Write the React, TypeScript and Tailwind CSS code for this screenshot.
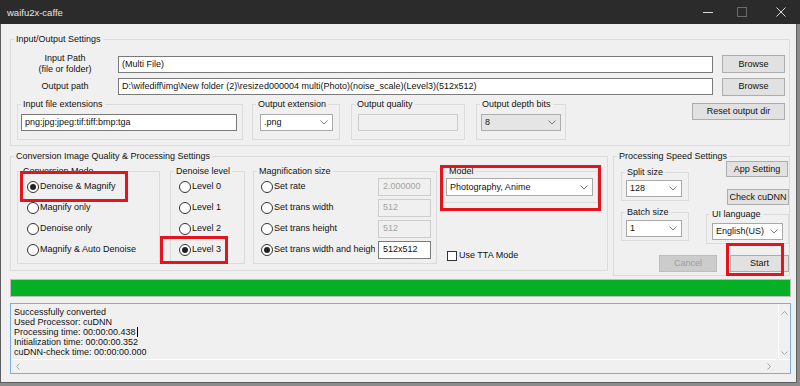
import React from 'react'

const Chevron = () => (
  <svg width="8" height="5" viewBox="0 0 8 5" className="shrink-0">
    <path d="M0.5 0.5 L4 4 L7.5 0.5" fill="none" stroke="#7a7a7a" strokeWidth="1" />
  </svg>
)

const Legend = ({ children }: { children: React.ReactNode }) => (
  <legend className="ml-[3px] px-[2px] leading-[11px]">{children}</legend>
)

const TextBox = ({
  children,
  className = '',
  disabled = false,
}: {
  children?: React.ReactNode
  className?: string
  disabled?: boolean
}) => (
  <div
    className={`flex items-center overflow-hidden whitespace-nowrap border pl-[3px] ${
      disabled
        ? 'border-[#cccccc] bg-[#f0f0f0] text-[#a3a3a3]'
        : 'border-[#7a7a7a] bg-white'
    } ${className}`}
  >
    {children}
  </div>
)

const Select = ({
  value,
  className = '',
  grey = false,
}: {
  value: string
  className?: string
  grey?: boolean
}) => (
  <div
    className={`flex h-[17px] items-center justify-between border pl-[3px] pr-[4px] ${
      grey ? 'border-[#adadad] bg-[#e5e5e5]' : 'border-[#a9a9a9] bg-white'
    } ${className}`}
  >
    <span className="whitespace-nowrap">{value}</span>
    <Chevron />
  </div>
)

const Button = ({
  children,
  className = '',
  disabled = false,
}: {
  children: React.ReactNode
  className?: string
  disabled?: boolean
}) => (
  <div
    className={`flex shrink-0 items-center justify-center border ${
      disabled
        ? 'border-[#bfbfbf] bg-[#cccccc] text-[#9d9d9d]'
        : 'border-[#adadad] bg-[#e1e1e1]'
    } ${className}`}
  >
    {children}
  </div>
)

const Radio = ({ label, checked = false }: { label: string; checked?: boolean }) => (
  <div className="flex h-[21px] items-center whitespace-nowrap">
    <span className="flex h-[12px] w-[12px] shrink-0 items-center justify-center rounded-full border border-[#333333] bg-white">
      {checked && <span className="h-[6px] w-[6px] rounded-full bg-[#222222]" />}
    </span>
    <span className="ml-[1px]">{label}</span>
  </div>
)

const magnifyRows = [
  { label: 'Set rate', value: '2.000000', disabled: true },
  { label: 'Set trans width', value: '512', disabled: true },
  { label: 'Set trans height', value: '512', disabled: true },
  { label: 'Set trans width and height', value: '512x512', disabled: false, checked: true },
]

const logLines = [
  'Successfully converted',
  'Used Processor: cuDNN',
  'Processing time: 00:00:00.438',
  'Initialization time: 00:00:00.352',
  'cuDNN-check time: 00:00:00.000',
]

export default function App() {
  return (
    <div className="relative h-[386px] w-[800px] overflow-hidden bg-[#8c8c8c] font-['Liberation_Sans',Arial,sans-serif] text-[9px] leading-[11px] text-[#111111]">
      {/* title bar */}
      <div className="flex h-[24px] items-center bg-[#2b2b2b] pl-[7px] text-[9.5px] text-[#e8e8e8]">
        <span>waifu2x-caffe</span>
        <div className="ml-auto mr-[14px] flex items-center">
          <svg width="10" height="10" viewBox="0 0 10 10">
            <path d="M0 5.5 H10" stroke="#dcdcdc" strokeWidth="1" />
          </svg>
          <svg width="10" height="10" viewBox="0 0 10 10" className="ml-[24px]">
            <rect x="0.5" y="0.5" width="9" height="9" fill="none" stroke="#6a6a6a" strokeWidth="1" />
          </svg>
          <svg width="10" height="10" viewBox="0 0 10 10" className="ml-[29px]">
            <path d="M0.5 0.5 L9.5 9.5 M9.5 0.5 L0.5 9.5" stroke="#dcdcdc" strokeWidth="1" />
          </svg>
        </div>
      </div>

      {/* window body */}
      <div className="h-[359px] w-[797px] border-x border-b border-[#5e5e5e] bg-[#f0f0f0] pl-[9px] pt-[10px]">
        {/* Input/Output Settings */}
        <fieldset className="w-[780px] border border-[#dcdcdc] pb-[5px]">
          <Legend>Input/Output Settings</Legend>
          <div className="mt-[7px] flex h-[24px] items-center">
            <div className="ml-[4px] w-[100px] text-center leading-[11px]">
              Input Path
              <br />
              (file or folder)
            </div>
            <TextBox className="ml-[3px] h-[17px] w-[595px]">(Multi File)</TextBox>
            <Button className="ml-[9px] h-[18px] w-[63px]">Browse</Button>
          </div>
          <div className="mt-[1px] flex h-[19px] items-center">
            <div className="ml-[4px] w-[100px] text-center">Output path</div>
            <TextBox className="ml-[3px] h-[17px] w-[595px]">
              {'D:\\wifediff\\img\\New folder (2)\\resized000004 multi(Photo)(noise_scale)(Level3)(512x512)'}
            </TextBox>
            <Button className="ml-[9px] h-[18px] w-[63px]">Browse</Button>
          </div>
          <div className="mt-[3px] flex items-start">
            <fieldset className="ml-[6px] w-[226px] border border-[#dcdcdc]">
              <Legend>Input file extensions</Legend>
              <div className="px-[3px] pb-[8px] pt-[4px]">
                <TextBox className="h-[17px] w-[216px]">png:jpg:jpeg:tif:tiff:bmp:tga</TextBox>
              </div>
            </fieldset>
            <fieldset className="ml-[9px] w-[88px] border border-[#dcdcdc]">
              <Legend>Output extension</Legend>
              <div className="pb-[8px] pl-[7px] pt-[4px]">
                <Select className="w-[73px]" value=".png" />
              </div>
            </fieldset>
            <fieldset className="ml-[11px] w-[114px] border border-[#dcdcdc]">
              <Legend>Output quality</Legend>
              <div className="pb-[8px] pl-[6px] pt-[4px]">
                <TextBox disabled className="h-[17px] w-[100px]" />
              </div>
            </fieldset>
            <fieldset className="ml-[11px] w-[90px] border border-[#dcdcdc]">
              <Legend>Output depth bits</Legend>
              <div className="pb-[8px] pl-[4px] pt-[4px]">
                <Select grey className="w-[80px]" value="8" />
              </div>
            </fieldset>
            <Button className="ml-[126px] mt-[4px] h-[17px] w-[93px]">Reset output dir</Button>
          </div>
        </fieldset>

        {/* conversion + processing speed */}
        <div className="mt-[5px] flex items-start">
          <fieldset className="w-[598px] border border-[#dcdcdc] pb-[6px]">
            <Legend>Conversion Image Quality &amp; Processing Settings</Legend>
            <div className="mt-[4px] flex items-stretch">
              <fieldset className="ml-[6px] w-[143px] border border-[#dcdcdc]">
                <Legend>Conversion Mode</Legend>
                <div className="-mt-[1px] pb-[3px] pl-[9px]">
                  <Radio checked label="Denoise & Magnify" />
                  <Radio label="Magnify only" />
                  <Radio label="Denoise only" />
                  <Radio label="Magnify & Auto Denoise" />
                </div>
              </fieldset>
              <fieldset className="ml-[10px] w-[75px] border border-[#dcdcdc]">
                <Legend>Denoise level</Legend>
                <div className="-mt-[1px] pb-[3px] pl-[8px]">
                  <Radio label="Level 0" />
                  <Radio label="Level 1" />
                  <Radio label="Level 2" />
                  <Radio checked label="Level 3" />
                </div>
              </fieldset>
              <fieldset className="ml-[8px] w-[184px] border border-[#dcdcdc]">
                <Legend>Magnification size</Legend>
                <div className="-mt-[1px] pb-[3px] pl-[7px]">
                  {magnifyRows.map((row) => (
                    <div key={row.label} className="flex h-[21px] items-center">
                      <div className="w-[114px] overflow-hidden">
                        <Radio checked={row.checked} label={row.label} />
                      </div>
                      <TextBox
                        disabled={row.disabled}
                        className="ml-[3px] h-[18px] w-[53px] pl-[4px]"
                      >
                        {row.value}
                      </TextBox>
                    </div>
                  ))}
                </div>
              </fieldset>
              <div className="ml-[6px] flex w-[155px] flex-col">
                <fieldset className="border border-[#dcdcdc]">
                  <Legend>Model</Legend>
                  <div className="pb-[6px] pl-[2px] pt-[1px]">
                    <Select className="h-[18px] w-[147px]" value="Photography, Anime" />
                  </div>
                </fieldset>
                <div className="mb-[3px] ml-[4px] mt-auto flex items-center">
                  <span className="h-[10px] w-[10px] border border-[#333333] bg-white" />
                  <span className="ml-[2px]">Use TTA Mode</span>
                </div>
              </div>
            </div>
          </fieldset>

          <fieldset className="ml-[5px] w-[177px] border border-[#dcdcdc] pb-[3px]">
            <Legend>Processing Speed Settings</Legend>
            <div className="flex items-start">
              <div className="ml-[7px] flex w-[68px] flex-col">
                <fieldset className="mt-[5px] border border-[#dcdcdc]">
                  <Legend>Split size</Legend>
                  <div className="pb-[3px] pl-[4px] pt-[2px]">
                    <Select className="w-[56px]" value="128" />
                  </div>
                </fieldset>
                <fieldset className="mt-[6px] border border-[#dcdcdc]">
                  <Legend>Batch size</Legend>
                  <div className="pb-[3px] pl-[4px] pt-[2px]">
                    <Select className="w-[56px]" value="1" />
                  </div>
                </fieldset>
              </div>
              <div className="flex flex-col">
                <Button className="-mt-[1px] ml-[37px] h-[16px] w-[62px]">App Setting</Button>
                <Button className="ml-[38px] mt-[12px] h-[16px] w-[62px]">Check cuDNN</Button>
                <fieldset className="ml-[17px] mt-[4px] w-[83px] border border-[#dcdcdc]">
                  <Legend>UI language</Legend>
                  <div className="pb-[3px] pl-[5px] pt-[3px]">
                    <Select className="w-[71px]" value="English(US)" />
                  </div>
                </fieldset>
              </div>
            </div>
            <div className="mt-[11px] flex">
              <Button disabled className="ml-[45px] h-[17px] w-[58px]">
                Cancel
              </Button>
              <Button className="ml-[13px] h-[17px] w-[59px]">Start</Button>
            </div>
          </fieldset>
        </div>

        {/* progress */}
        <div className="mt-[3px] h-[18px] w-[781px] border border-[#bcbcbc] bg-[#06b025]" />

        {/* log */}
        <div className="mt-[6px] flex h-[71px] w-[781px] flex-col border border-[#7aaee0]">
          <div className="flex flex-1">
            <div className="flex-1 pl-[3px] pt-[3px] leading-[10px]">
              {logLines.map((line, i) => (
                <div key={line} className="flex items-center whitespace-nowrap">
                  {line}
                  {i === 2 && <span className="ml-px inline-block h-[10px] w-px bg-black" />}
                </div>
              ))}
            </div>
            <div className="flex w-[12px] flex-col items-center justify-between border-l border-white pb-[4px] pt-[7px]">
              <svg width="7" height="4" viewBox="0 0 7 4">
                <path d="M0.5 3.5 L3.5 0.5 L6.5 3.5" fill="none" stroke="#a6a6a6" />
              </svg>
              <svg width="7" height="4" viewBox="0 0 7 4">
                <path d="M0.5 0.5 L3.5 3.5 L6.5 0.5" fill="none" stroke="#a6a6a6" />
              </svg>
            </div>
          </div>
          <div className="flex h-[14px] items-center border-t border-white">
            <svg width="4" height="7" viewBox="0 0 4 7" className="ml-[5px]">
              <path d="M3.5 0.5 L0.5 3.5 L3.5 6.5" fill="none" stroke="#a6a6a6" />
            </svg>
            <svg width="4" height="7" viewBox="0 0 4 7" className="ml-auto mr-[19px]">
              <path d="M0.5 0.5 L3.5 3.5 L0.5 6.5" fill="none" stroke="#a6a6a6" />
            </svg>
          </div>
        </div>
      </div>

      {/* red annotation boxes */}
      <div className="absolute left-[20px] top-[171px] h-[31px] w-[108px] border-[3px] border-[#e3141e]" />
      <div className="absolute left-[160px] top-[236px] h-[28px] w-[68px] border-[3px] border-[#e3141e]" />
      <div className="absolute left-[440px] top-[165px] h-[46px] w-[161px] border-[3px] border-[#e3141e]" />
      <div className="absolute left-[726px] top-[243px] h-[33px] w-[58px] border-[3px] border-[#e3141e]" />
    </div>
  )
}
